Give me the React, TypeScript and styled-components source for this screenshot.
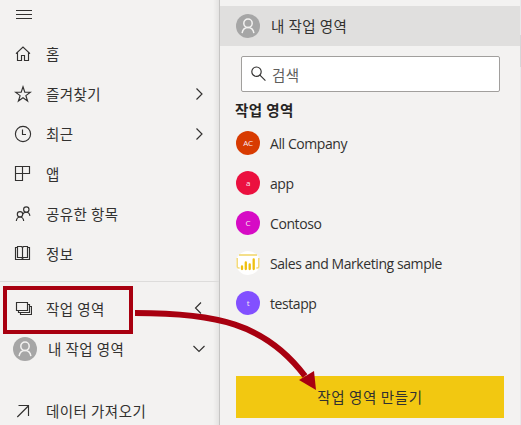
import React from "react";
import styled, { createGlobalStyle } from "styled-components";

const GlobalStyle = createGlobalStyle`
  * { box-sizing: border-box; }
  body {
    margin: 0;
    background: #f3f2f1;
    color: #323130;
    font-family: "Noto Sans CJK KR", sans-serif;
    font-size: 14.5px;
    letter-spacing: 0.45px;
    overflow: hidden;
  }
`;

const Screen = styled.div`
  position: relative;
  display: flex;
  width: 521px;
  height: 425px;
  overflow: hidden;
  background: #f3f2f1;
`;

const Nav = styled.nav`
  display: flex;
  flex-direction: column;
  width: 220px;
  border-right: 1px solid #c6c5c4;
  background: linear-gradient(to left, #e4e3e2, #f3f2f1 6px);
`;

const MenuButton = styled.button`
  display: flex;
  flex: none;
  align-items: center;
  height: 34px;
  padding: 0 0 5px 16px;
  border: 0;
  background: none;
  color: #323130;
`;

const NavRow = styled.a<{ $top?: number; $avatar?: boolean }>`
  display: flex;
  flex: none;
  align-items: center;
  height: 40px;
  margin-top: ${(p) => p.$top ?? 0}px;
  padding: 0 13px 0 ${(p) => (p.$avatar ? 13 : 14)}px;
  gap: ${(p) => (p.$avatar ? 11 : 14)}px;
`;

const NavLabel = styled.span`
  flex: 1;
  padding-bottom: 1px;
  line-height: 20px;
  white-space: nowrap;
`;

const Divider = styled.hr`
  flex: none;
  width: 219px;
  height: 1px;
  margin: 7px 0 0;
  border: 0;
  background: #dddcdb;
`;

const Icon = styled.svg`
  display: block;
  flex: none;
  fill: none;
  stroke: currentColor;
  stroke-width: 1.15;
`;

const Panel = styled.main`
  display: flex;
  flex: 1;
  flex-direction: column;
  padding-top: 6px;
`;

const Selected = styled.div`
  display: flex;
  flex: none;
  align-items: center;
  gap: 11px;
  height: 40px;
  padding-left: 16px;
  background: #e0dfde;
`;

const Search = styled.label`
  display: flex;
  flex: none;
  align-items: center;
  gap: 5px;
  width: 259px;
  height: 36px;
  margin: 10px 0 0 21px;
  padding-left: 9px;
  border: 1px solid #a19f9d;
  border-radius: 2px;
  background: #fff;
`;

const SearchInput = styled.input`
  width: 200px;
  height: 24px;
  padding: 0;
  border: 0;
  outline: 0;
  background: transparent;
  font: inherit;
  letter-spacing: inherit;
  &::placeholder { color: #605e5c; opacity: 1; }
`;

const Heading = styled.h2`
  margin: 8px 0 3px 15px;
  color: #252423;
  font-size: 14.5px;
  font-weight: 700;
  line-height: 20px;
`;

const WorkspaceRow = styled.div`
  display: flex;
  flex: none;
  align-items: center;
  gap: 10px;
  height: 40px;
  padding-left: 16px;
`;

const WorkspaceName = styled.span`
  padding-top: 2px;
  font-family: "Open Sans", sans-serif;
  font-size: 14px;
  letter-spacing: -0.42px;
  line-height: 20px;
  white-space: nowrap;
`;

const Initials = styled.span<{ $color: string }>`
  display: flex;
  align-items: center;
  justify-content: center;
  width: 24px;
  height: 24px;
  border-radius: 50%;
  background: ${(p) => p.$color};
  color: #f8e8f0;
  font-family: "Open Sans", sans-serif;
  font-size: 8px;
  letter-spacing: -0.2px;
  line-height: 10px;
`;

const CreateButton = styled.button`
  flex: none;
  width: 268px;
  height: 42px;
  margin: 53px 0 0 16px;
  padding: 0 0 2px;
  border: 0;
  background: #f2c811;
  color: #323130;
  font: inherit;
  letter-spacing: 0.6px;
`;

const Scrollbar = styled.div`
  position: absolute;
  top: 0;
  right: 0;
  width: 1px;
  height: 425px;
  background: #e8e9eb;
`;

const ScrollThumb = styled.div`
  width: 1px;
  height: 32px;
  margin-top: 35px;
  background: #d5d6d8;
`;

const Highlight = styled.div`
  position: absolute;
  top: 286px;
  left: 3px;
  width: 130px;
  height: 48px;
  border: 4px solid #a80010;
`;

const Arrow = styled.svg`
  position: absolute;
  top: 0;
  left: 0;
  pointer-events: none;
`;

const Person = styled.g`
  stroke: #f3f2f1;
  stroke-width: 1.5;
`;

function Avatar() {
  return (
    <Icon width="24" height="24" viewBox="0 0 24 24">
      <circle cx="12" cy="12" r="12" fill="#a6a6a6" stroke="none" />
      <Person>
        <circle cx="12" cy="9.3" r="4.2" />
        <path d="M6.1 19.2C6.7 15.6 8.8 13.5 12 13.5s5.3 2.1 5.9 5.7" />
      </Person>
    </Icon>
  );
}

function Chevron({ direction }: { direction: "right" | "left" | "down" }) {
  const paths = {
    right: "M4.5 1.5 10 7 4.5 12.5",
    left: "M9 0.5 3.5 6 9 11.5",
    down: "M1.5 4 7 9.5 12.5 4",
  };
  return (
    <Icon width="14" height="14" viewBox="0 0 14 14">
      <path d={paths[direction]} />
    </Icon>
  );
}

const glyphs: Record<string, React.ReactNode> = {
  home: <path d="M2 8.7 9 2l7 6.7M3.5 7.5v8h4v-5h3v5h4v-8" />,
  star: <path d="m9 1.8 1.8 5.4h5.6l-4.5 3.4 1.7 5.4L9 12.7 4.4 16l1.7-5.4-4.5-3.4h5.6z" />,
  recent: (
    <>
      <circle cx="9" cy="9" r="7.6" />
      <path d="M8.5 4.5v5H12" />
    </>
  ),
  apps: <path d="M1.5 1.5h14v7h-14zM8.5 1.5v14h-7v-14" />,
  shared: (
    <>
      <circle cx="12.3" cy="4.5" r="2.7" />
      <circle cx="6" cy="9.3" r="2.7" />
      <path d="M2.3 16c.3-2.5 1.7-4 3.7-4s3.4 1.5 3.7 4M8.6 9.2c.7-1.4 2-2 3.7-2 2.1 0 3.3 1.4 3.6 3.6" />
    </>
  ),
  book: (
    <path d="M3.5 1.5h4l1 1 1-1h4v11h-4l-1 1-1-1h-4zM8.5 2.5v11M3.5 2.5h-2v12h14v-12h-2" />
  ),
  workspaces: <path d="M2.5 2.5h11v8h-11zM13.5 4.5h2v8h-11v-2M15.5 6.5h2v8h-11v-2" />,
  upload: <path d="M3.3 15 14.3 4M4.5 3.5h10V14" />,
};

function Glyph({ name }: { name: string }) {
  return (
    <Icon width="18" height="18" viewBox="0 0 18 18">
      {glyphs[name]}
    </Icon>
  );
}

function SampleLogo() {
  return (
    <Icon width="24" height="24" viewBox="0 0 24 24">
      <circle cx="12" cy="12" r="12" fill="#fff" stroke="none" />
      <path d="M3 4h18" stroke="#f4df8b" strokeWidth="2" />
      <path d="M1.2 7v8.5q0 1.5 1.5 1.5h1M22.8 7v8.5q0 1.5-1.5 1.5h-1" stroke="#f3d977" strokeWidth="1.5" />
      <g stroke="#efc010" strokeLinecap="round">
        <path d="M6 15.5v2.5M9.8 11.5V18M13.7 13.5V18M17.7 8.5V18" strokeWidth="2.3" />
      </g>
    </Icon>
  );
}

const links = [
  { icon: "home", label: "홈" },
  { icon: "star", label: "즐겨찾기", expandable: true },
  { icon: "recent", label: "최근", expandable: true },
  { icon: "apps", label: "앱" },
  { icon: "shared", label: "공유한 항목" },
  { icon: "book", label: "정보" },
];

const workspaces = [
  { name: "All Company", initials: "AC", color: "#d83b01" },
  { name: "app", initials: "a", color: "#eb103f" },
  { name: "Contoso", initials: "C", color: "#d60bc5" },
  { name: "Sales and Marketing sample", initials: "", color: "" },
  { name: "testapp", initials: "t", color: "#8250ff" },
];

export default function App() {
  return (
    <>
      <GlobalStyle />
      <Screen>
        <Nav>
          <MenuButton aria-label="메뉴">
            <Icon width="16" height="12" viewBox="0 0 16 12">
              <path d="M0 1.5h16M0 5.5h16M0 9.5h16" />
            </Icon>
          </MenuButton>
          {links.map((l) => (
            <NavRow key={l.label}>
              <Glyph name={l.icon} />
              <NavLabel>{l.label}</NavLabel>
              {l.expandable && <Chevron direction="right" />}
            </NavRow>
          ))}
          <Divider />
          <NavRow $top={7}>
            <Glyph name="workspaces" />
            <NavLabel>작업 영역</NavLabel>
            <Chevron direction="left" />
          </NavRow>
          <NavRow $avatar>
            <Avatar />
            <NavLabel>내 작업 영역</NavLabel>
            <Chevron direction="down" />
          </NavRow>
          <NavRow $top={22}>
            <Glyph name="upload" />
            <NavLabel>데이터 가져오기</NavLabel>
          </NavRow>
        </Nav>
        <Panel>
          <Selected>
            <Avatar />
            <NavLabel>내 작업 영역</NavLabel>
          </Selected>
          <Search>
            <Icon width="16" height="16" viewBox="0 0 16 16">
              <circle cx="5.5" cy="5.7" r="4.7" />
              <path d="m8.9 9.2 5.5 5.5" />
            </Icon>
            <SearchInput placeholder="검색" />
          </Search>
          <Heading>작업 영역</Heading>
          {workspaces.map((w) => (
            <WorkspaceRow key={w.name}>
              {w.initials ? <Initials $color={w.color}>{w.initials}</Initials> : <SampleLogo />}
              <WorkspaceName>{w.name}</WorkspaceName>
            </WorkspaceRow>
          ))}
          <CreateButton>작업 영역 만들기</CreateButton>
        </Panel>
        <Scrollbar>
          <ScrollThumb />
        </Scrollbar>
        <Highlight />
        <Arrow width="521" height="425" viewBox="0 0 521 425">
          <path d="M135 313C215 313 265 323 305 376" fill="none" stroke="#a80010" strokeWidth="6" />
          <path d="m299 380 15-9 2 19z" fill="#a80010" />
        </Arrow>
      </Screen>
    </>
  );
}
